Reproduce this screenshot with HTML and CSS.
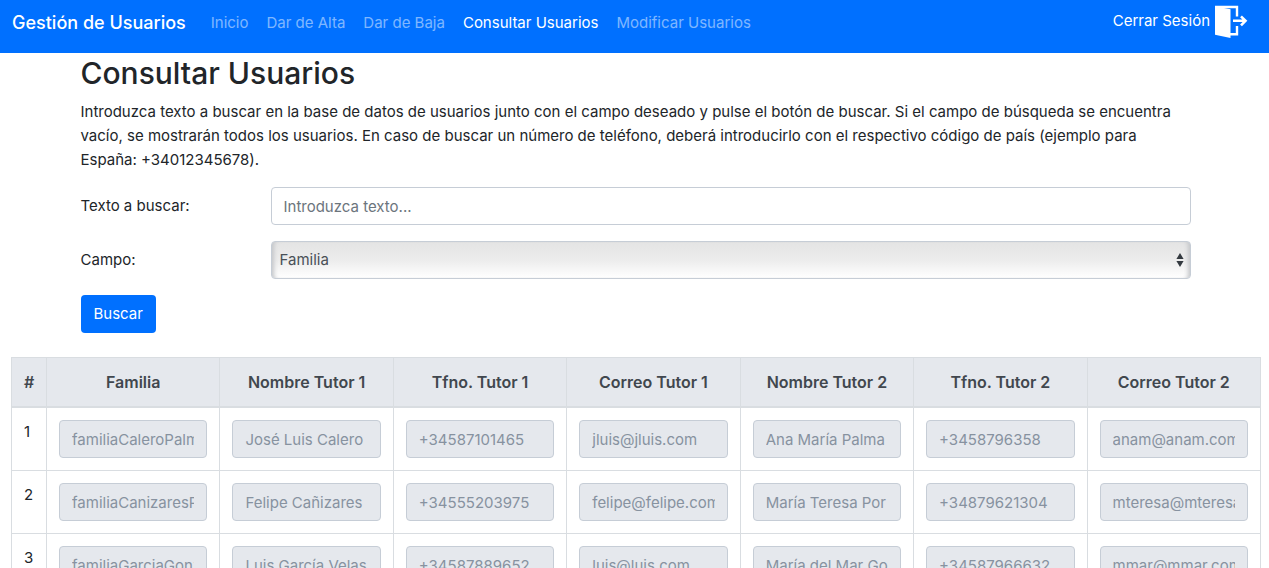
FILE: index.html
```html
<!DOCTYPE html>
<html lang="es">
<head>
<meta charset="utf-8">
<meta name="viewport" content="width=device-width, initial-scale=1">
<title>Gestión de Usuarios</title>
<link rel="stylesheet" href="styles.css">
</head>
<body>
<nav class="navbar">
  <a class="brand" href="#">Gestión de Usuarios</a>
  <div class="nav-links">
    <a class="nav-link" href="#">Inicio</a>
    <a class="nav-link" href="#">Dar de Alta</a>
    <a class="nav-link" href="#">Dar de Baja</a>
    <a class="nav-link active" href="#">Consultar Usuarios</a>
    <a class="nav-link" href="#">Modificar Usuarios</a>
  </div>
  <a class="logout" href="#">
    <span>Cerrar Sesión</span>
    <svg class="logout-icon" viewBox="0 0 34 34" aria-hidden="true">
      <path d="M1 1.2 16.5 4.2V33L1 29.8Z" fill="#fff"/>
      <path d="M1 2H23V11.5M23 21V29.2H16" fill="none" stroke="#fff" stroke-width="2.4"/>
      <path d="M19 15.8H31M27 11.3 31.5 15.8 27 20.3" fill="none" stroke="#fff" stroke-width="2.6"/>
    </svg>
  </a>
</nav>
<main>
  <section class="container">
    <h2 class="title">Consultar Usuarios</h2>
    <p class="intro">Introduzca texto a buscar en la base de datos de usuarios junto con el campo deseado y pulse el botón de buscar. Si el campo de búsqueda se encuentra vacío, se mostrarán todos los usuarios. En caso de buscar un número de teléfono, deberá introducirlo con el respectivo código de país (ejemplo para España: +34012345678).</p>
    <form class="search">
      <div class="form-row">
        <label for="texto">Texto a buscar:</label>
        <input class="control" id="texto" type="text" placeholder="Introduzca texto...">
      </div>
      <div class="form-row">
        <label for="campo">Campo:</label>
        <div class="select-wrap">
          <select class="control select" id="campo"><option>Familia</option></select>
          <svg class="arrows" viewBox="0 0 8 16" aria-hidden="true"><path d="M4 1 7.6 7H.4ZM4 15 .4 9H7.6Z" fill="#343a40"/></svg>
        </div>
      </div>
      <button class="button" type="button">Buscar</button>
    </form>
  </section>
  <div class="table-wrap">
    <table class="users">
      <thead>
        <tr><th class="num">#</th><th>Familia</th><th>Nombre Tutor 1</th><th>Tfno. Tutor 1</th><th>Correo Tutor 1</th><th>Nombre Tutor 2</th><th>Tfno. Tutor 2</th><th>Correo Tutor 2</th></tr>
      </thead>
      <tbody>
        <tr>
          <td>1</td>
          <td><input class="control" aria-label="Familia" value="familiaCaleroPalma" disabled></td>
          <td><input class="control" aria-label="Nombre Tutor 1" value="José Luis Calero" disabled></td>
          <td><input class="control" aria-label="Teléfono Tutor 1" value="+34587101465" disabled></td>
          <td><input class="control" aria-label="Correo Tutor 1" value="jluis@jluis.com" disabled></td>
          <td><input class="control" aria-label="Nombre Tutor 2" value="Ana María Palma" disabled></td>
          <td><input class="control" aria-label="Teléfono Tutor 2" value="+3458796358" disabled></td>
          <td><input class="control" aria-label="Correo Tutor 2" value="anam@anam.com" disabled></td>
        </tr>
        <tr>
          <td>2</td>
          <td><input class="control" aria-label="Familia" value="familiaCanizaresPor" disabled></td>
          <td><input class="control" aria-label="Nombre Tutor 1" value="Felipe Cañizares" disabled></td>
          <td><input class="control" aria-label="Teléfono Tutor 1" value="+34555203975" disabled></td>
          <td><input class="control" aria-label="Correo Tutor 1" value="felipe@felipe.com" disabled></td>
          <td><input class="control" aria-label="Nombre Tutor 2" value="María Teresa Por" disabled></td>
          <td><input class="control" aria-label="Teléfono Tutor 2" value="+34879621304" disabled></td>
          <td><input class="control" aria-label="Correo Tutor 2" value="mteresa@mteresa.com" disabled></td>
        </tr>
        <tr>
          <td>3</td>
          <td><input class="control" aria-label="Familia" value="familiaGarciaGonzalez" disabled></td>
          <td><input class="control" aria-label="Nombre Tutor 1" value="Luis García Velas" disabled></td>
          <td><input class="control" aria-label="Teléfono Tutor 1" value="+34587889652" disabled></td>
          <td><input class="control" aria-label="Correo Tutor 1" value="luis@luis.com" disabled></td>
          <td><input class="control" aria-label="Nombre Tutor 2" value="María del Mar González" disabled></td>
          <td><input class="control" aria-label="Teléfono Tutor 2" value="+34587966632" disabled></td>
          <td><input class="control" aria-label="Correo Tutor 2" value="mmar@mmar.com" disabled></td>
        </tr>
      </tbody>
    </table>
  </div>
</main>
</body>
</html>
```
FILE: styles.css
```css
* { box-sizing: border-box; }
body {
  margin: 0;
  background: #fff;
  color: #212529;
  font: 400 15px/24px Inter, "Liberation Sans", sans-serif;
}
.navbar {
  display: flex;
  align-items: flex-start;
  padding: 5px 21px 12px 12px;
  background: #0070ff;
}
.navbar a { color: #fff; text-decoration: none; }
.brand { font-size: 18px; font-weight: 500; line-height: 36px; margin-right: 17px; white-space: nowrap; }
.nav-links { display: flex; flex: 1; gap: 2px; }
.navbar .nav-link { padding: 0 8px; line-height: 36px; color: rgba(255, 255, 255, .5); white-space: nowrap; }
.navbar .active { color: #fff; }
.logout { display: flex; gap: 4px; line-height: 32px; white-space: nowrap; }
.logout-icon { width: 34px; height: 34px; }

.container { max-width: 1140px; margin: 0 auto; padding: 0 14px 0 16px; }
.title { margin: 0 0 8px; padding-top: 1px; font-size: 30px; line-height: 38px; font-weight: 500; }
.intro { margin: 0 0 15px; }
.form-row { display: grid; grid-template-columns: 190px 1fr; align-items: center; margin-bottom: 16px; }
.control {
  display: block;
  width: 100%;
  height: 38px;
  padding: 6px 12px;
  border: 1px solid #c6cdd6;
  border-radius: 4px;
  background: #fff;
  color: #495057;
  font: inherit;
}
.control::placeholder { color: #6c757d; opacity: 1; }
.control:disabled { background: #e5e8ed; color: #8792a0; }
.select-wrap { display: grid; align-items: center; }
.select-wrap > * { grid-area: 1 / 1; }
.select {
  appearance: none;
  padding: 6px 8px;
  background: linear-gradient(#e4e4e4, #ececec 50%, #fff);
  box-shadow: inset 5px 0 4px -3px #c4c6c9, inset -5px 0 4px -3px #c4c6c9;
}
.arrows { width: 8px; height: 16px; justify-self: end; margin-right: 7px; pointer-events: none; }
.button {
  display: block;
  padding: 7px 13px;
  border: 0;
  border-radius: 4px;
  background: #0070ff;
  color: #fff;
  font: inherit;
}

.table-wrap { margin: 24px 8px 16px 11px; }
.users { width: 100%; table-layout: fixed; border-collapse: collapse; }
.users th, .users td { padding: 12px; border: 1px solid #d9dde1; vertical-align: top; }
.users th { border-bottom-width: 2px; background: #e5e8ed; color: #41474e; font-size: 16px; font-weight: 600; text-align: center; white-space: nowrap; }
.users .num { width: 35px; }
```
